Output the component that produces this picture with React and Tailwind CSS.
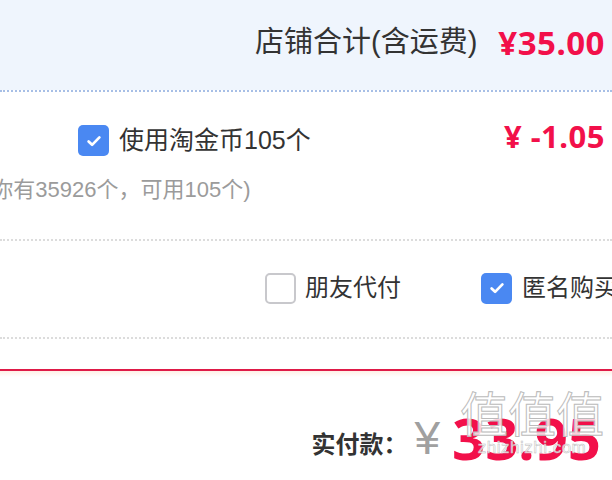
import React from 'react'

const Check = ({ checked }) => (
    checked ? (
        <span className="flex h-[31px] w-[31px] shrink-0 items-center justify-center rounded-[5px] bg-[#4a88f2]">
            <svg width="18" height="18" viewBox="0 0 16 16" fill="none">
                <path d="M3.2 8.4l3.1 3L12.8 4.8" stroke="white" strokeWidth="2.4" strokeLinecap="round" strokeLinejoin="round" />
            </svg>
        </span>
    ) : (
        <span className="h-[31px] w-[31px] shrink-0 rounded-[5px] border-2 border-[#c8c8cc] bg-white" />
    )
)

const App = () => {
    return (
        <div
            className="relative h-[480px] w-[612px] overflow-hidden bg-white text-[#333]"
            style={{ fontFamily: '"Liberation Sans", "Noto Sans CJK SC", sans-serif' }}
        >
            {/* Shop total */}
            <div className="flex h-[90px] items-center justify-end gap-[21px] bg-[#eff5fd] pb-[6px] pr-[7px]">
                <span className="whitespace-nowrap text-[29px] leading-none text-[#333]">店铺合计(含运费)</span>
                <span className="whitespace-nowrap font-['Noto_Sans'] text-[33px] font-bold leading-none tracking-[0.5px] text-[#f2104a]">¥35.00</span>
            </div>
            <div className="border-b-2 border-dotted border-[#a7bfe6]" />

            {/* Coins */}
            <div className="h-[147px]">
                <div className="flex items-center pt-[33px]">
                    <div className="ml-[78px] flex items-center gap-[10px]">
                        <Check checked />
                        <span className="whitespace-nowrap text-[25px] leading-none">使用淘金币105个</span>
                    </div>
                    <span className="-mt-[8px] ml-auto mr-[7px] whitespace-nowrap font-['Noto_Sans'] text-[31px] font-bold leading-none tracking-[0.5px] text-[#f2104a]">¥ -1.05</span>
                </div>
                <div className="-ml-[16px] mt-[23px] whitespace-nowrap text-[22px] leading-none text-[#9b9b9b]">
                    (你有35926个，可用105个)
                </div>
            </div>
            <div className="border-b-2 border-dotted border-[#dcdcdc]" />

            {/* Options */}
            <div className="flex h-[96px] items-center pb-[2px]">
                <div className="ml-[265px] flex shrink-0 items-center gap-[9px]">
                    <Check />
                    <span className="whitespace-nowrap text-[24px] leading-none">朋友代付</span>
                </div>
                <div className="ml-[80px] flex shrink-0 items-center gap-[10px]">
                    <Check checked />
                    <span className="whitespace-nowrap text-[24px] leading-none">匿名购买</span>
                </div>
            </div>
            <div className="border-b-2 border-dotted border-[#dcdcdc]" />

            {/* Total bar */}
            <div className="mt-[30px] h-[2px] bg-[#df1a48]" />
            <div className="h-[6px] bg-gradient-to-b from-[#fff0e6] to-white" />
            <div className="flex items-end justify-end pr-[11px] pt-[32px]">
                <span className="mb-[10px] whitespace-nowrap text-[24px] font-bold leading-none text-[#333]">实付款：</span>
                <span className="mb-[6px] ml-[7px] text-[46px] leading-none text-[#a0a0a0]">¥</span>
                <span className="ml-[12px] font-['Noto_Sans'] text-[58px] font-bold leading-none text-[#f2104a]">33.95</span>
            </div>

            {/* watermark */}
            <div className="pointer-events-none absolute left-[460px] top-[392px] flex flex-col items-center text-white/80">
                <span className="text-[48px] leading-none" style={{ WebkitTextStroke: '1px #bbb' }}>值值值</span>
                <span className="-mt-[1px] text-[17px] leading-none tracking-[0.5px]" style={{ WebkitTextStroke: '0.5px #bbb' }}>zhizhizhi.com</span>
            </div>
        </div>
    )
}

export default App
